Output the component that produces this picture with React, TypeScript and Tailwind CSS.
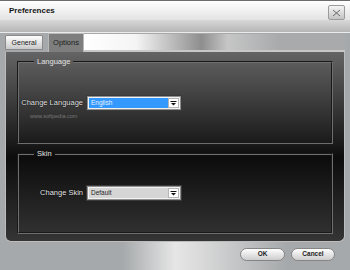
import React from 'react';

const Arrow = () => (
  <svg width="7" height="5" viewBox="0 0 7 5">
    <rect x="0.5" y="0" width="6" height="1" fill="#111" />
    <path d="M1 2 L6 2 L3.5 4.5 Z" fill="#111" />
  </svg>
);

const Select = ({ value, active }: { value: string; active?: boolean }) => (
  <div className="ml-[4px] w-[94px] h-[14px] flex border border-[#8e8e8e] bg-[#f2f2f2] p-[1px] shadow-[0_0_0_1px_#3a3a3a]">
    <div
      className={
        active
          ? 'flex-1 flex items-center pl-[2px] bg-[#3399ff] text-[6.5px] text-[#e8f1ff] leading-none'
          : 'flex-1 flex items-center pl-[2px] bg-[#d5d5d5] text-[6.5px] text-[#1e1e1e] leading-none'
      }
    >
      {value}
    </div>
    <div className="w-[11px] flex items-center justify-center bg-white border border-[#b5b5b5]">
      <Arrow />
    </div>
  </div>
);

const App = () => {
  return (
    <div className="w-[350px] h-[270px] flex flex-col overflow-hidden bg-[#a6a9ab] font-['Liberation_Sans',Arial,sans-serif]">
      {/* title bar */}
      <div className="h-[20px] shrink-0 flex justify-between items-start border-t border-[#6c6c6c] bg-linear-to-b from-white to-[#e3e3e3] pl-[9px] pr-[5px]">
        <span className="mt-[6px] text-[8px] leading-none font-bold text-[#141414]">Preferences</span>
        <div className="mt-[4px] w-[17px] h-[15px] flex items-center justify-center rounded-[2px] border border-[#9c9c9c] bg-linear-to-b from-[#f4f4f4] to-[#c4c4c4]">
          <svg width="9" height="8" viewBox="0 0 9 8">
            <path d="M1 1 L8 7 M8 1 L1 7" stroke="#6a6a6a" strokeWidth="1" />
          </svg>
        </div>
      </div>

      {/* band under title */}
      <div className="h-[13px] shrink-0 bg-linear-to-b from-[#d8d8d8] to-[#b6b6b6] border-b border-[#ebebeb]" />

      {/* tabs */}
      <div className="h-[19px] shrink-0 flex items-end px-[5px]">
        <div className="mb-[2px] w-[38px] h-[15px] flex items-center justify-center rounded-t-[2px] border border-[#8a8a8a] bg-linear-to-b from-white to-[#c9c9c9] text-[7px] text-[#222] leading-none">
          General
        </div>
        <div className="ml-[5px] w-[36px] h-[19px] flex items-center justify-center border-x border-t border-[#b9b9b9] bg-[#7e7e7e] text-[7.5px] text-[#1c1c1c] leading-none">
          Options
        </div>
        <div className="flex-1 h-[18px] bg-[linear-gradient(90deg,#ffffff_0%,#f4f4f4_20%,#8e8e8e_45%,#c6c6c6_55%,#a8aaac_75%,#a8aaac_100%)] border-b-2 border-[#c8c8c8]" />
      </div>

      {/* panel */}
      <div className="mx-[5px] h-[190px] shrink-0 flex flex-col pt-[5px] px-[11px] rounded-b-[6px] border-x border-b border-[#bcbcbc] bg-[linear-gradient(180deg,#646464_0%,#1b1b1b_48%,#0c0c0c_56%,#353535_100%)]">
        <fieldset className="h-[87px] border-2 [border-style:groove] border-[#6e6e6e]">
          <legend className="ml-[15px] px-[3px] text-[7.5px] leading-[10px] text-[#e2e2e2]">Language</legend>
          <div className="mt-[29px] flex items-center">
            <span className="w-[64px] text-right whitespace-nowrap text-[7.5px] leading-none text-[#e8e8e8] [text-shadow:0_0_1px_#000,0_0_1px_#000]">
              Change Language
            </span>
            <Select value="English" active />
          </div>
          <div className="mt-[4px] pl-[11px] text-[5.5px] leading-none text-[#777]">www.softpedia.com</div>
        </fieldset>

        <fieldset className="mt-[5px] h-[85px] border-2 [border-style:groove] border-[#6e6e6e]">
          <legend className="ml-[15px] px-[3px] text-[7.5px] leading-[10px] text-[#e2e2e2]">Skin</legend>
          <div className="mt-[27px] flex items-center">
            <span className="w-[64px] text-right whitespace-nowrap text-[7.5px] leading-none text-[#e8e8e8] [text-shadow:0_0_1px_#000,0_0_1px_#000]">
              Change Skin
            </span>
            <Select value="Default" />
          </div>
        </fieldset>
      </div>

      {/* buttons */}
      <div className="flex-1 flex justify-end items-start gap-[6px] pt-[6px] pr-[15px] bg-[linear-gradient(90deg,#a6a9ab_0%,#a6a9ab_35%,#e6e6e6_50%,#dcdcdc_56%,#a6a9ab_82%,#a6a9ab_100%)]">
        <button className="w-[45px] h-[13px] flex items-center justify-center rounded-full border border-[#858585] bg-linear-to-b from-white to-[#cdcdcd] text-[6.5px] font-bold leading-none text-[#222]">
          OK
        </button>
        <button className="w-[44px] h-[13px] flex items-center justify-center rounded-full border border-[#858585] bg-linear-to-b from-white to-[#cdcdcd] text-[6.5px] font-bold leading-none text-[#222]">
          Cancel
        </button>
      </div>
    </div>
  );
};

export default App;
